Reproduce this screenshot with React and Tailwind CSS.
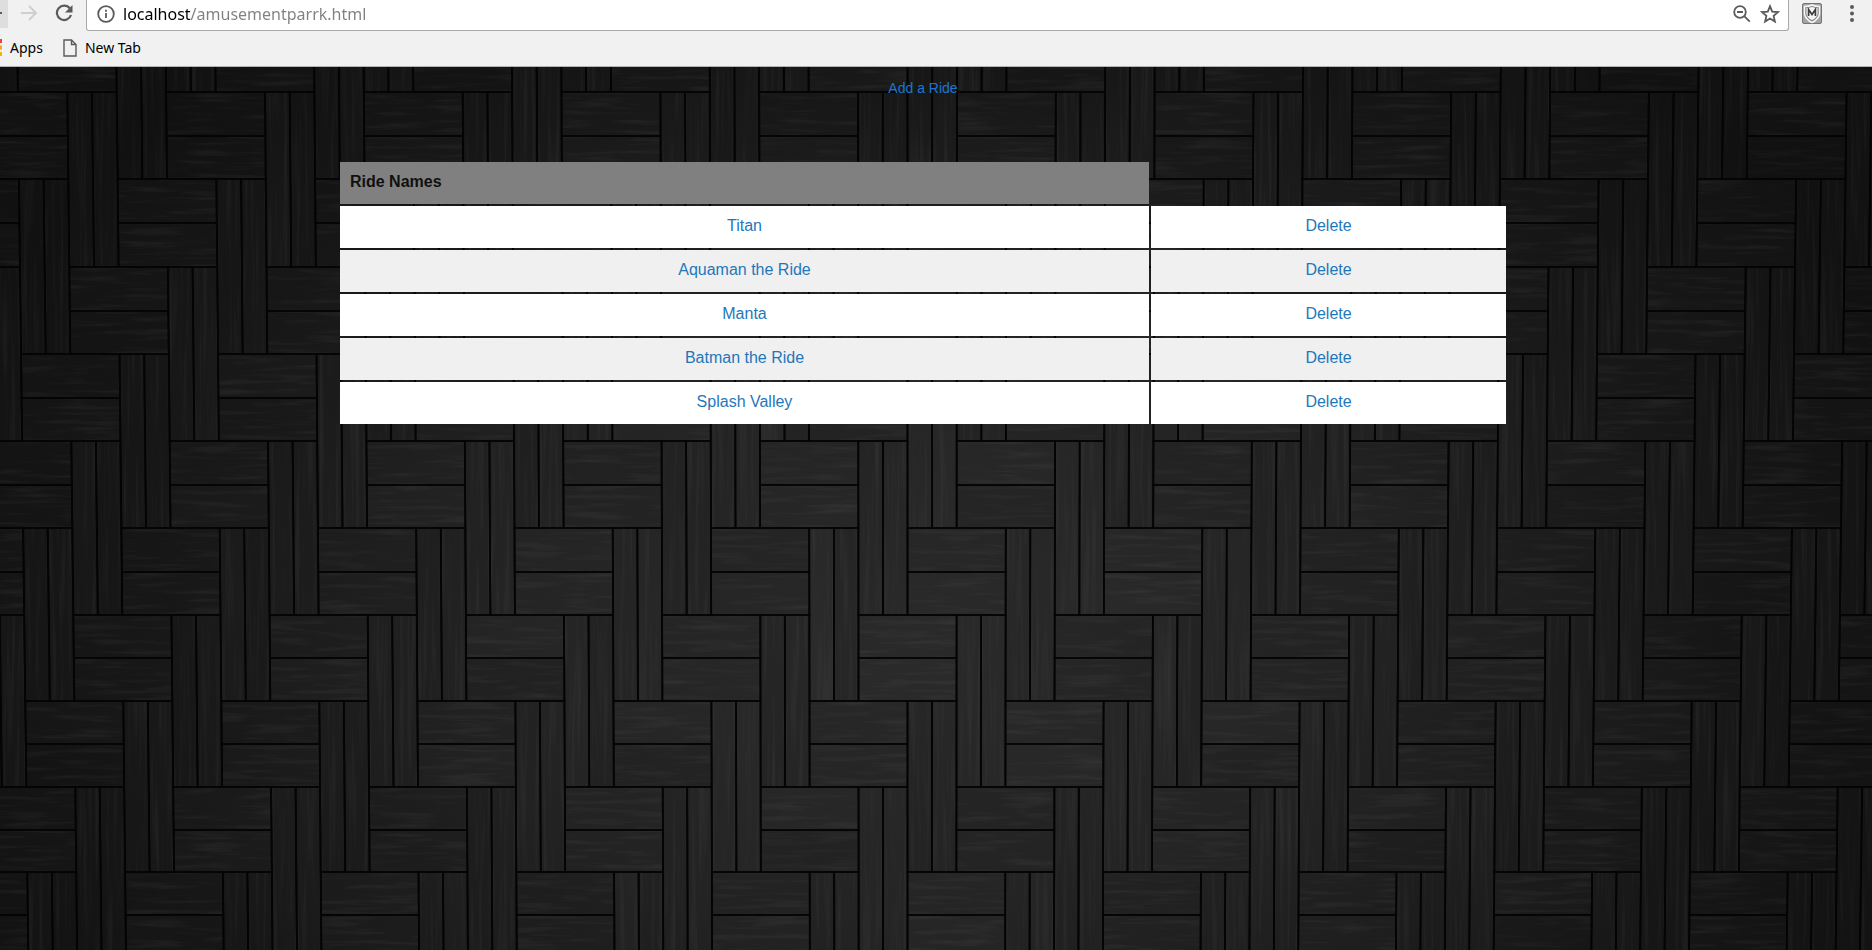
const rides = ["Titan", "Aquaman the Ride", "Manta", "Batman the Ride", "Splash Valley"];

const rowEdges = [4, 92, 179, 267, 354, 441, 528, 615, 701, 787, 872, 957];

// The weave narrows slightly toward the bottom, around a fixed vertical axis.
const px = (j, y) => 907.5 + (j * (197.7 - 0.0027 * (y - 92))) / 4;

const quad = (j1, j2, y1, y2) =>
  `M${px(j1, y1).toFixed(1)} ${y1}L${px(j2, y1).toFixed(1)} ${y1}L${px(j2, y2).toFixed(1)} ${y2}L${px(j1, y2).toFixed(1)} ${y2}Z`;

function buildPlanks() {
  const across = [];
  const upright = [];
  for (let k = -1; k < 11; k++) {
    const top = k < 0 ? -84 : rowEdges[k];
    const mid = rowEdges[k + 1];
    const end = k + 2 < rowEdges.length ? rowEdges[k + 2] : 1042;
    for (let n = -6; n <= 6; n++) {
      const j = n * 4 + ((((2 - k) % 4) + 4) % 4);
      const half = Math.round((top + mid) / 2);
      across.push(quad(j, j + 2, top, half), quad(j, j + 2, half, mid));
      upright.push(quad(j + 2, j + 2.5, top, end), quad(j + 2.5, j + 3, top, end));
    }
  }
  return { across, upright };
}

const { across, upright } = buildPlanks();
const tone = (i) => ((i * 7919 + 13) % 17) / 17;

function WoodBackdrop() {
  return (
    <svg
      aria-hidden="true"
      viewBox="0 67 1872 883"
      preserveAspectRatio="xMidYMin slice"
      className="absolute inset-0 h-full w-full"
    >
      <defs>
        <radialGradient id="glow" gradientUnits="userSpaceOnUse" cx="0" cy="0" r="1" gradientTransform="translate(930 640) scale(1060 760)">
          <stop offset="0" stopColor="#2c2c2c" />
          <stop offset="0.4" stopColor="#252525" />
          <stop offset="0.75" stopColor="#191919" />
          <stop offset="1" stopColor="#131313" />
        </radialGradient>
        <filter id="grain-x" x="0" y="0" width="100%" height="100%" colorInterpolationFilters="sRGB">
          <feTurbulence type="fractalNoise" baseFrequency="0.016 0.2" numOctaves="3" seed="4" />
          <feColorMatrix values="0 0 0 0 1  0 0 0 0 1  0 0 0 0 1  0.5 0 0 0 -0.22" />
        </filter>
        <filter id="grain-y" x="0" y="0" width="100%" height="100%" colorInterpolationFilters="sRGB">
          <feTurbulence type="fractalNoise" baseFrequency="0.25 0.008" numOctaves="3" seed="9" />
          <feColorMatrix values="0 0 0 0 1  0 0 0 0 1  0 0 0 0 1  0.5 0 0 0 -0.22" />
        </filter>
        <clipPath id="across-planks">
          <path d={across.join("")} />
        </clipPath>
        <clipPath id="upright-planks">
          <path d={upright.join("")} />
        </clipPath>
      </defs>
      <rect y="67" width="1872" height="883" fill="url(#glow)" />
      <g clipPath="url(#across-planks)">
        <rect y="67" width="1872" height="883" filter="url(#grain-x)" opacity="0.24" />
      </g>
      <g clipPath="url(#upright-planks)">
        <rect y="67" width="1872" height="883" filter="url(#grain-y)" opacity="0.22" />
      </g>
      <g stroke="#040404" strokeWidth="1.7" fill="#000000">
        {across.map((d, i) => (
          <path key={i} d={d} fillOpacity={tone(i) * 0.1} />
        ))}
        {upright.map((d, i) => (
          <path key={i} d={d} fillOpacity={tone(i + 5) * 0.1} />
        ))}
      </g>
    </svg>
  );
}

function BrowserChrome() {
  return (
    <header className="border-b border-[#b0b4b4] bg-[#f1f1f1] font-['Noto_Sans','Open_Sans',sans-serif]">
      <div className="flex h-[31px] items-start">
        <button type="button" aria-label="Back" className="h-7 w-2 overflow-hidden bg-[#dedede]">
          <svg viewBox="0 0 8 28" className="h-7 w-2" stroke="#5a5a5a" strokeWidth="2" fill="none">
            <path d="M0 13h2" />
          </svg>
        </button>
        <button type="button" aria-label="Forward" disabled className="ml-3 mt-1">
          <svg viewBox="0 0 18 18" className="h-[18px] w-[18px]" stroke="#cfcfcf" strokeWidth="2" fill="none">
            <path d="M1 9h15M9 2l7 7-7 7" />
          </svg>
        </button>
        <button type="button" aria-label="Reload" className="ml-4 mt-1">
          <svg viewBox="0 0 20 18" className="h-[18px] w-5" fill="none">
            <path d="M15.8 4.4A7.2 7.2 0 1 0 17 11" stroke="#5a5a5a" strokeWidth="2.2" />
            <path d="M18.5 1v7.5H11z" fill="#5a5a5a" />
          </svg>
        </button>
        <div className="ml-3 flex h-[31px] flex-1 items-start rounded-b-[3px] border border-t-0 border-[#a9a9a9] bg-white pl-2">
          <svg viewBox="0 0 18 18" className="ml-0.5 mt-[5px] h-[18px] w-[18px]" fill="none" stroke="#5a5a5a" strokeWidth="1.8">
            <circle cx="9" cy="9" r="7.8" />
            <path d="M9 8v5M9 4.8v2" />
          </svg>
          <input
            aria-label="Address"
            defaultValue="localhost/amusementparrk.html"
            className="ml-2 h-7 flex-1 bg-[linear-gradient(to_right,#000_68px,#808080_68px)] bg-clip-text text-base leading-7 text-transparent outline-none"
          />
          <button type="button" aria-label="Zoom" className="mt-1">
            <svg viewBox="0 0 20 20" className="h-5 w-5" fill="none" stroke="#5a5a5a" strokeWidth="1.8">
              <circle cx="8" cy="8" r="5.8" />
              <path d="M5 8h6M12.2 12.2l5.6 5.4" />
            </svg>
          </button>
          <button type="button" aria-label="Bookmark this page" className="ml-2 mr-2 mt-1">
            <svg viewBox="0 0 20 20" className="h-5 w-5" fill="none" stroke="#5a5a5a" strokeWidth="1.8">
              <path d="M10 2.2l2.2 5.4 5.8.5-4.400 3.800 1.300 5.600-4.900-3-4.900 3 1.300-5.600L2 8.100l5.800-.5z" />
            </svg>
          </button>
        </div>
        <button type="button" aria-label="Security extension" className="ml-3 mt-[3px]">
          <svg viewBox="0 0 22 22" className="h-[22px] w-[22px]">
            <rect x="1.500" y="0.500" width="19" height="20" rx="1.500" fill="#a3a3a3" stroke="#757575" />
            <path d="M3.500 3.500Q7.500 3.500 11 2 14.500 3.500 18.500 3.500V11Q17.500 16.500 11 19.500 4.500 16.500 3.500 11Z" fill="#8f8f8f" stroke="#f8f8f8" strokeWidth="1.400" />
            <path d="M5.500 5Q8.500 5 11 4 13.500 5 16.500 5V11Q15.500 15 11 17 6.500 15 5.500 11Z" fill="#f4f4f4" />
            <path d="M7.600 13V6.500L11 11.500 14.400 6.500V13" fill="none" stroke="#3c3c3c" strokeWidth="1.700" />
          </svg>
        </button>
        <button type="button" aria-label="Menu" className="ml-[26px] mr-[17px] mt-1">
          <svg viewBox="0 0 6 20" className="h-5 w-1.5" fill="#5a5a5a">
            <circle cx="3" cy="3" r="2" />
            <circle cx="3" cy="9.500" r="2" />
            <circle cx="3" cy="16" r="2" />
          </svg>
        </button>
      </div>
      <nav className="flex h-[35px] items-center pb-0.5 text-sm text-black">
        <a href="#apps" className="flex items-center">
          <svg viewBox="0 0 2 17" className="mr-2 h-[17px] w-0.5">
            <path d="M0 0h2v4H0z" fill="#ef4136" />
            <path d="M0 6.500h2v4H0z" fill="#f9a11b" />
            <path d="M0 13h2v4H0z" fill="#f5b400" />
          </svg>
          Apps
        </a>
        <a href="#new-tab" className="ml-5 flex items-center">
          <svg viewBox="0 0 14 18" className="mr-2 h-[18px] w-3.5" fill="none" stroke="#5a5a5a" strokeWidth="1.400">
            <path d="M1 1h7.500L13 5.500V17H1zM8.500 1v4.500H13" />
          </svg>
          New Tab
        </a>
      </nav>
    </header>
  );
}

export default function App() {
  return (
    <div className="flex min-h-screen flex-col bg-[#161616]">
      <BrowserChrome />
      <div className="relative flex-1">
        <WoodBackdrop />
        <main className="relative pr-[26px] font-['Liberation_Sans',Arial,sans-serif]">
          <div className="flex justify-center pt-[11px] text-sm">
            <a href="#add-ride" className="text-[#1b76d1]">Add a Ride</a>
          </div>
          <table className="mx-auto mt-[62px] w-full max-w-[1170px] table-fixed border-separate border-spacing-[2px] text-base">
            <colgroup>
              <col />
              <col className="w-[355px]" />
            </colgroup>
            <thead>
              <tr>
                <th scope="col" className="h-[42px] bg-[#808080] px-2.5 py-2 text-left align-top font-bold leading-[23px] text-[#101010]">
                  Ride Names
                </th>
              </tr>
            </thead>
            <tbody>
              {rides.map((ride) => (
                <tr key={ride} className="bg-white text-center align-top leading-[23px] text-[#1f77bb] even:bg-[#f0f0f0]">
                  <td className="h-[42px] p-2">
                    <a href="#ride">{ride}</a>
                  </td>
                  <td className="h-[42px] p-2">
                    <a href="#delete">Delete</a>
                  </td>
                </tr>
              ))}
            </tbody>
          </table>
        </main>
      </div>
    </div>
  );
}
